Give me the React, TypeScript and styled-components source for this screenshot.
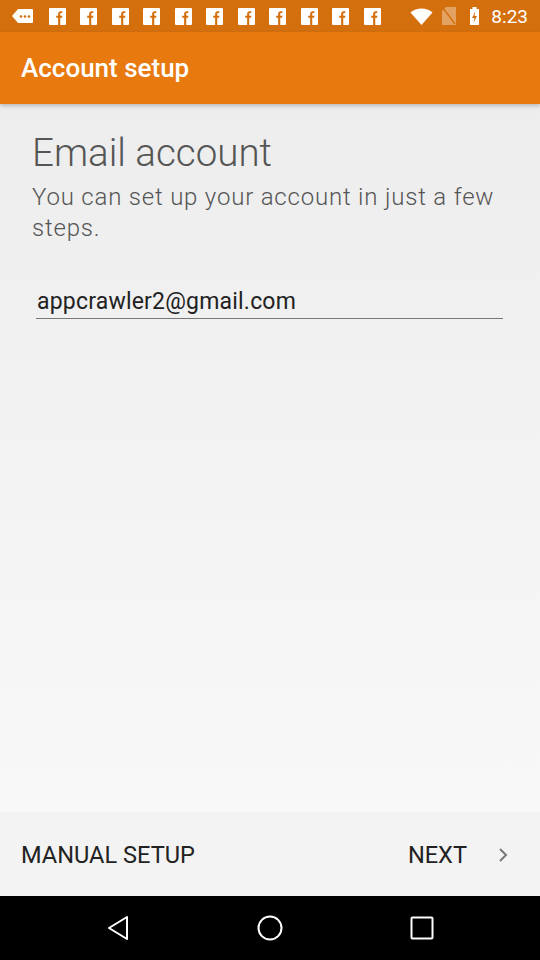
import React from "react";
import styled, { createGlobalStyle } from "styled-components";

const Global = createGlobalStyle`
  html, body { margin: 0; padding: 0; }
  body { font-family: Roboto, "Noto Sans", sans-serif; background: #000; }
  #root { width: 540px; height: 960px; }
`;

const Screen = styled.div`
  width: 540px;
  height: 960px;
  display: flex;
  flex-direction: column;
  overflow: hidden;
`;

const StatusBar = styled.div`
  height: 32px;
  background: #d46f0e;
  display: flex;
  align-items: center;
  padding: 0 12px 0 12px;
  box-sizing: border-box;
`;

const NotifIcons = styled.div`
  display: flex;
  align-items: center;
  gap: 14.5px;
  flex: 1;
`;

const SysIcons = styled.div`
  display: flex;
  align-items: center;
`;

const SysSlot = styled.span<{ $gap: number }>`
  display: flex;
  margin-right: ${(p) => p.$gap}px;
`;

const Clock = styled.span`
  color: #fff;
  font-size: 19px;
  font-family: Roboto, sans-serif;
`;

const Toolbar = styled.div`
  height: 72px;
  background: #e8790f;
  display: flex;
  align-items: center;
  padding-left: 21px;
  box-shadow: 0 2px 4px rgba(0, 0, 0, 0.22);
  position: relative;
  z-index: 1;
`;

const ToolbarTitle = styled.h1`
  margin: 0;
  color: #fff;
  font-size: 26px;
  font-weight: 500;
`;

const Content = styled.div`
  flex: 1;
  background: linear-gradient(#ededed, #f8f8f8);
  padding: 26px 37px 0 32px;
  display: flex;
  flex-direction: column;
`;

const Heading = styled.h2`
  margin: 0;
  font-size: 38.5px;
  font-weight: 300;
  color: #555;
  line-height: 46px;
`;

const Subtitle = styled.p`
  margin: 6px 0 0;
  font-size: 24px;
  font-weight: 300;
  letter-spacing: 0.8px;
  color: #555;
  line-height: 31px;
`;

const Field = styled.div`
  margin: 43px 0 0 4px;
  border-bottom: 1.5px solid #777;
  padding: 0 0 1px 1px;
  font-size: 23px;
  letter-spacing: 0.2px;
  color: #222;
  line-height: 30px;
`;

const BottomBar = styled.div`
  height: 84px;
  background: #f3f3f3;
  display: flex;
  align-items: center;
  justify-content: space-between;
  padding: 2px 32px 0 21px;
  box-sizing: border-box;
`;

const ActionText = styled.span`
  font-size: 23.6px;
  color: #222;
`;

const NextGroup = styled.div`
  display: flex;
  align-items: center;
  gap: 31px;
`;

const NavBar = styled.div`
  height: 64px;
  background: #000;
  display: flex;
  align-items: center;
  justify-content: space-between;
  padding: 0 106px 0 107px;
`;

const FbIcon = () => (
  <svg width="17" height="17" viewBox="0 0 16 16">
    <rect width="16" height="16" rx="1" fill="#fff" />
    <path d="M8.6 16V9.2H6.8V7.2h1.8V5.6c0-1.7 1-2.6 2.5-2.6.7 0 1.2.1 1.4.1v1.7h-.9c-.8 0-1 .4-1 1v1.4h2l-.3 2h-1.7V16z" fill="#d46f0e" />
  </svg>
);

export default function App() {
  return (
    <>
      <Global />
      <Screen>
        <StatusBar>
          <NotifIcons>
            <svg width="22" height="16" viewBox="0 0 22 16">
              <path d="M6 1h14a1 1 0 0 1 1 1v12a1 1 0 0 1-1 1H6L0 8z" fill="#fff" />
              <circle cx="9" cy="8.5" r="1.3" fill="#d46f0e" />
              <circle cx="13" cy="8.5" r="1.3" fill="#d46f0e" />
              <circle cx="17" cy="8.5" r="1.3" fill="#d46f0e" />
            </svg>
            {Array.from({ length: 11 }).map((_, i) => (
              <FbIcon key={i} />
            ))}
          </NotifIcons>
          <SysIcons>
            <SysSlot $gap={9}>
              <svg width="23" height="17" viewBox="0 0 22 17">
                <path d="M11 17L0 4.5C3 2 7 0.5 11 0.5S19 2 22 4.5z" fill="#fff" />
              </svg>
            </SysSlot>
            <SysSlot $gap={14}>
              <svg width="14" height="18" viewBox="0 0 14 18">
                <path d="M4 0h10v18H0V4z" fill="#fff" opacity="0.35" />
                <path d="M1 1L13 17" stroke="#d46f0e" strokeWidth="1.4" />
              </svg>
            </SysSlot>
            <SysSlot $gap={12}>
              <svg width="9" height="18" viewBox="0 0 9 18">
                <rect x="2.5" y="0" width="4" height="2" fill="#fff" />
                <rect x="0" y="2" width="9" height="16" fill="#fff" />
                <path d="M5.5 4L2 11h2.5l-1 5 3.5-7H4.5z" fill="#d46f0e" />
              </svg>
            </SysSlot>
            <Clock>8:23</Clock>
          </SysIcons>
        </StatusBar>
        <Toolbar>
          <ToolbarTitle>Account setup</ToolbarTitle>
        </Toolbar>
        <Content>
          <Heading>Email account</Heading>
          <Subtitle>You can set up your account in just a few steps.</Subtitle>
          <Field>appcrawler2@gmail.com</Field>
        </Content>
        <BottomBar>
          <ActionText>MANUAL SETUP</ActionText>
          <NextGroup>
            <ActionText>NEXT</ActionText>
            <svg width="10" height="16" viewBox="0 0 10 16">
              <path d="M2 2l6 6-6 6" stroke="#777" strokeWidth="2" fill="none" />
            </svg>
          </NextGroup>
        </BottomBar>
        <NavBar>
          <svg width="22" height="26" viewBox="0 0 22 26">
            <path d="M20 2L2 13l18 11z" stroke="#fff" strokeWidth="2" fill="none" strokeLinejoin="round" />
          </svg>
          <svg width="26" height="26" viewBox="0 0 26 26">
            <circle cx="13" cy="13" r="11.5" stroke="#fff" strokeWidth="2" fill="none" />
          </svg>
          <svg width="24" height="24" viewBox="0 0 24 24">
            <rect x="1.5" y="1.5" width="21" height="21" rx="1" stroke="#fff" strokeWidth="2" fill="none" />
          </svg>
        </NavBar>
      </Screen>
    </>
  );
}
